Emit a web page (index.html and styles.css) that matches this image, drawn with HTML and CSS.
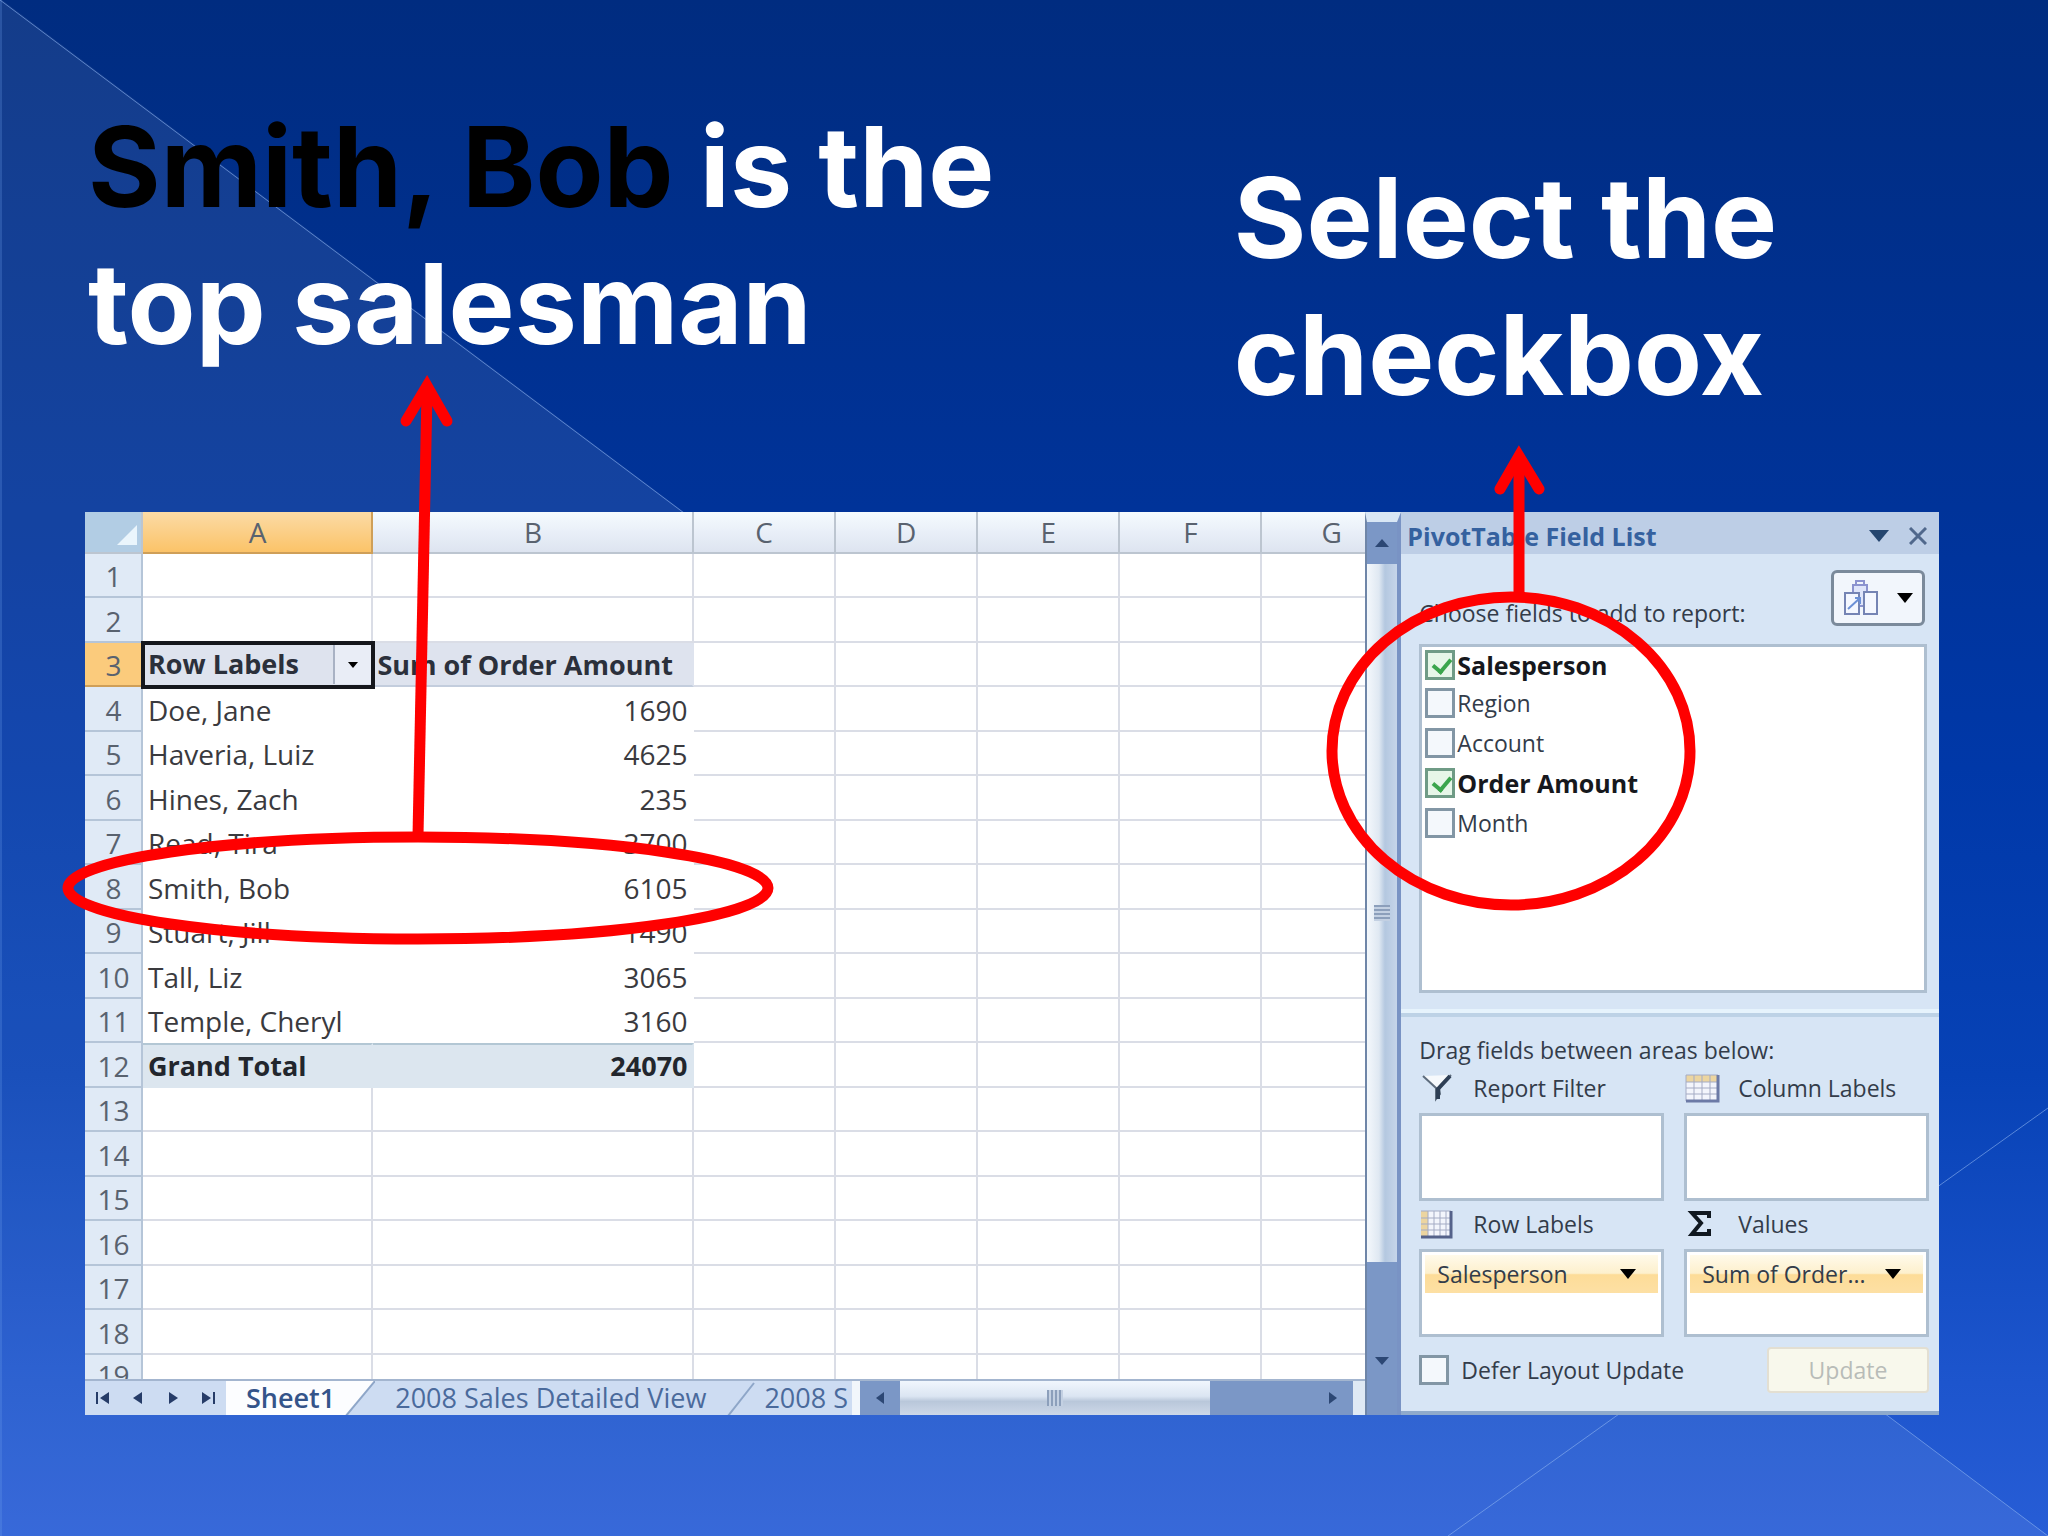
FILE: index.html
```
<!DOCTYPE html>
<html lang="en">
<head>
  <meta charset="UTF-8" />
  <meta name="viewport" content="width=device-width, initial-scale=1" />
  <title>PivotTable: top salesman</title>
  <link rel="stylesheet" href="styles.css">
</head>
<body>
  <main class="slide">
    <svg class="backdrop" viewBox="0 0 2048 1536" preserveAspectRatio="none" aria-hidden="true">
      <path class="wedge" d="M2 0L2048 1536H2z" />
      <path class="ray" d="M0 0L2048 1536M1448 1536L2048 1108M1 0V1536" />
    </svg>

    <header class="callouts">
      <h1><span class="name">Smith, Bob</span> is the<br>top salesman</h1>
      <h2>Select the<br>checkbox</h2>
    </header>

    <section class="workbook">
      <div class="sheet">
        <table class="cells">
          <colgroup>
            <col class="col-num"><col class="col-a"><col class="col-b">
            <col class="col-n"><col class="col-n"><col class="col-n"><col class="col-n"><col>
          </colgroup>
          <thead>
            <tr>
              <th class="corner"><svg viewBox="0 0 24 24" width="24" height="24"><path d="M22 2V22H2z" fill="#eaf5fc" /></svg></th>
              <th class="active">A</th><th>B</th><th>C</th><th>D</th><th>E</th><th>F</th><th class="last">G</th>
            </tr>
          </thead>
          <tbody>
            <tr><th>1</th><td></td><td></td><td></td><td></td><td></td><td></td><td></td></tr>
            <tr><th>2</th><td></td><td></td><td></td><td></td><td></td><td></td><td></td></tr>
            <tr class="pivot-head">
              <th class="active">3</th>
              <td class="selected"><div class="filter-cell">Row Labels<button type="button" aria-label="Filter row labels"><svg viewBox="0 0 12 8" width="12" height="8"><path d="M1 1H11L6 7z" /></svg></button></div></td>
              <td>Sum of Order Amount</td><td></td><td></td><td></td><td></td><td></td>
            </tr>
            <tr class="pivot"><th>4</th><td>Doe, Jane</td><td>1690</td><td></td><td></td><td></td><td></td><td></td></tr>
            <tr class="pivot"><th>5</th><td>Haveria, Luiz</td><td>4625</td><td></td><td></td><td></td><td></td><td></td></tr>
            <tr class="pivot"><th>6</th><td>Hines, Zach</td><td>235</td><td></td><td></td><td></td><td></td><td></td></tr>
            <tr class="pivot"><th>7</th><td>Read, Tira</td><td>3700</td><td></td><td></td><td></td><td></td><td></td></tr>
            <tr class="pivot"><th>8</th><td>Smith, Bob</td><td>6105</td><td></td><td></td><td></td><td></td><td></td></tr>
            <tr class="pivot"><th>9</th><td>Stuart, Jill</td><td>1490</td><td></td><td></td><td></td><td></td><td></td></tr>
            <tr class="pivot"><th>10</th><td>Tall, Liz</td><td>3065</td><td></td><td></td><td></td><td></td><td></td></tr>
            <tr class="pivot"><th>11</th><td>Temple, Cheryl</td><td>3160</td><td></td><td></td><td></td><td></td><td></td></tr>
            <tr class="pivot total"><th>12</th><td>Grand Total</td><td>24070</td><td></td><td></td><td></td><td></td><td></td></tr>
            <tr><th>13</th><td></td><td></td><td></td><td></td><td></td><td></td><td></td></tr>
            <tr><th>14</th><td></td><td></td><td></td><td></td><td></td><td></td><td></td></tr>
            <tr><th>15</th><td></td><td></td><td></td><td></td><td></td><td></td><td></td></tr>
            <tr><th>16</th><td></td><td></td><td></td><td></td><td></td><td></td><td></td></tr>
            <tr><th>17</th><td></td><td></td><td></td><td></td><td></td><td></td><td></td></tr>
            <tr><th>18</th><td></td><td></td><td></td><td></td><td></td><td></td><td></td></tr>
            <tr class="cut"><th><div>19</div></th><td></td><td></td><td></td><td></td><td></td><td></td><td></td></tr>
          </tbody>
        </table>

        <div class="tabbar">
          <div class="tab-nav">
            <button type="button" aria-label="First sheet"><svg viewBox="0 0 16 16" width="16" height="16"><path d="M1 2H3V14H1zM14 2V14L5 8z" /></svg></button>
            <button type="button" aria-label="Previous sheet"><svg viewBox="0 0 16 16" width="16" height="16"><path d="M12 2V14L3 8z" /></svg></button>
            <button type="button" aria-label="Next sheet"><svg viewBox="0 0 16 16" width="16" height="16"><path d="M4 2V14L13 8z" /></svg></button>
            <button type="button" aria-label="Last sheet"><svg viewBox="0 0 16 16" width="16" height="16"><path d="M2 2V14L11 8zM13 2H15V14H13z" /></svg></button>
          </div>
          <button type="button" class="tab current">Sheet1</button>
          <svg class="slant" viewBox="0 0 30 36" width="30" height="36"><path d="M0 0H30L0 36z" fill="#fcfdff" /><path d="M30 0L0 36" stroke="#8ea6c8" stroke-width="2" /></svg>
          <button type="button" class="tab">2008 Sales Detailed View</button>
          <svg class="slant" viewBox="0 0 30 36" width="30" height="36"><path d="M28 2L2 35" stroke="#8ea6c8" stroke-width="2" /></svg>
          <button type="button" class="tab next">2008 S</button>
          <div class="hscroll">
            <span class="arrow"><svg viewBox="0 0 16 16" width="16" height="16"><path d="M12 2V14L4 8z" /></svg></span>
            <span class="thumb"><i class="grip"></i></span>
            <span class="arrow end"><svg viewBox="0 0 16 16" width="16" height="16"><path d="M4 2V14L12 8z" /></svg></span>
          </div>
        </div>
      </div>

      <div class="vscroll">
        <span class="arrow"><svg viewBox="0 0 16 16" width="16" height="16"><path d="M1 12H15L8 4z" /></svg></span>
        <span class="thumb"><i class="grip"></i></span>
        <span class="arrow end"><svg viewBox="0 0 16 16" width="16" height="16"><path d="M1 4H15L8 12z" /></svg></span>
      </div>

      <aside class="pane">
        <div class="pane-title">
          <strong>PivotTable Field List</strong>
          <button type="button" aria-label="Pane options"><svg viewBox="0 0 20 12" width="20" height="12"><path d="M0 0H20L10 12z" fill="#25466f" /></svg></button>
          <button type="button" aria-label="Close"><svg viewBox="0 0 18 18" width="18" height="18"><path d="M1 1L17 17M17 1L1 17" stroke="#50688c" stroke-width="3" /></svg></button>
        </div>

        <div class="choose">
          <span>Choose fields to add to report:</span>
          <button type="button" class="layout-btn" aria-label="Field list layout">
            <svg viewBox="0 0 36 40" width="36" height="40">
              <path d="M10 7H24V28H10z" fill="#dfe5fa" stroke="#8c93cf" stroke-width="2" />
              <path d="M13 7V3H21V7" fill="none" stroke="#8c93cf" stroke-width="2" />
              <path d="M2 15H16V36H2zM21 14H34V36H21z" fill="#f4f7ff" stroke="#7584b4" stroke-width="2" />
              <path d="M5 31L17 20M12 20H17V26" fill="none" stroke="#6c90d6" stroke-width="2" />
            </svg>
            <svg viewBox="0 0 16 10" width="16" height="10"><path d="M0 0H16L8 10z" /></svg>
          </button>
        </div>

        <div class="fields">
          <label class="on"><input type="checkbox" checked>Salesperson</label>
          <label><input type="checkbox">Region</label>
          <label><input type="checkbox">Account</label>
          <label class="on"><input type="checkbox" checked>Order Amount</label>
          <label><input type="checkbox">Month</label>
        </div>

        <div class="areas">
          <p>Drag fields between areas below:</p>
          <div class="area-grid">
            <div class="area">
              <div class="area-name">
                <svg viewBox="0 0 36 32" width="36" height="32"><path d="M4 4L17 16V27L21 22L20 16L32 3" fill="#f6f9fc" stroke="#5d6c7d" stroke-width="2" /><path d="M31 4L19 17V27" fill="none" stroke="#2e3f55" stroke-width="4" /></svg>
                Report Filter
              </div>
              <div class="drop"></div>
            </div>
            <div class="area">
              <div class="area-name">
                <svg viewBox="0 0 36 32" width="36" height="32"><path d="M2 3H34V29H2z" fill="#f3f5fc" /><path d="M2 3H34V10H2z" fill="#ecd5a0" /><path d="M2 3V29M10 3V29M18 3V29M26 3V29M2 10H34M2 16H34M2 22H34M2 3H34" stroke="#a4abc4" stroke-width="1" /><path d="M2 29H34V3" fill="none" stroke="#6c7aa6" stroke-width="3" /></svg>
                Column Labels
              </div>
              <div class="drop"></div>
            </div>
            <div class="area">
              <div class="area-name">
                <svg viewBox="0 0 36 32" width="36" height="32"><path d="M2 3H32V29H2z" fill="#f3f5fc" /><path d="M2 3H9V29H2z" fill="#ecd5a0" /><path d="M9 3V29M15 3V29M21 3V29M27 3V29M2 10H32M2 16H32M2 22H32M2 3H32" stroke="#a4abc4" stroke-width="1" /><path d="M2 29H32V3" fill="none" stroke="#55628a" stroke-width="3" /></svg>
                Row Labels
              </div>
              <div class="drop">
                <button type="button" class="chip"><span>Salesperson</span><svg viewBox="0 0 16 10" width="16" height="10"><path d="M0 0H16L8 10z" /></svg></button>
              </div>
            </div>
            <div class="area">
              <div class="area-name">
                <svg viewBox="0 0 36 32" width="36" height="32"><path d="M25 10V5H8L17 15L8 26H25V21" fill="none" stroke="#101820" stroke-width="4" /></svg>
                Values
              </div>
              <div class="drop">
                <button type="button" class="chip"><span>Sum of Order...</span><svg viewBox="0 0 16 10" width="16" height="10"><path d="M0 0H16L8 10z" /></svg></button>
              </div>
            </div>
          </div>
          <div class="defer">
            <label><input type="checkbox">Defer Layout Update</label>
            <button type="button" disabled>Update</button>
          </div>
        </div>
      </aside>
    </section>

    <svg class="marks" viewBox="0 0 2048 1536" preserveAspectRatio="none" aria-hidden="true">
      <ellipse cx="418" cy="888" rx="350" ry="51" />
      <path d="M418 836L427 392" />
      <path class="head" d="M406 421L427 386L447 421" />
      <ellipse cx="1511" cy="751" rx="179" ry="154" />
      <path d="M1519 597V460" />
      <path class="head" d="M1500 489L1519 456L1539 489" />
    </svg>
  </main>
</body>
</html>
```
FILE: styles.css
```
* {
  box-sizing: border-box;
}

body {
  margin: 0;
  font-family: "Open Sans", "Noto Sans", sans-serif;
  font-size: 23px;
  color: #333c4a;
}

button {
  font: inherit;
  color: inherit;
  background: none;
  border: none;
  padding: 0;
}

svg {
  flex: none;
}

.slide {
  position: relative;
  min-height: 100vh;
  padding-bottom: 120px;
  overflow: hidden;
  background: linear-gradient(#002c80 0%, #003399 33%, #0038a8 50%, #0742b6 70%, #1d55cd 90%, #275dd6 100%);
}

.backdrop,
.marks {
  position: absolute;
  inset: 0;
  width: 100%;
  height: 100%;
  pointer-events: none;
}
.wedge {
  fill: #fff;
  fill-opacity: 0.08;
}
.ray {
  fill: none;
  stroke: #8db4f0;
  stroke-opacity: 0.6;
  stroke-width: 1;
}

/* headings */
.callouts {
  position: relative;
  display: grid;
  grid-template-columns: 1144fr 813fr;
  min-height: 512px;
  padding: 98px 0 0 88px;
  color: #fff;
  font-family: Inter, "Open Sans", sans-serif;
}
.callouts h1,
.callouts h2 {
  margin: 0;
  font-size: 111px;
  line-height: 137px;
  font-weight: 700;
}
.callouts h2 {
  margin-top: 51px;
}
.name {
  color: #000;
}

/* workbook window */
.workbook {
  position: relative;
  display: grid;
  grid-template-columns: minmax(0, 1fr) 36px 29%;
  margin: 0 109px 0 85px;
  background: #fff;
}

.cells {
  width: 100%;
  table-layout: fixed;
  border-spacing: 0;
  font-size: 28px;
  line-height: 40px;
}
.col-num {
  width: 58px;
}
.col-a {
  width: 18%;
}
.col-b {
  width: 25%;
}
.col-n {
  width: 11.1%;
}
.cells th,
.cells td {
  padding: 2px 4px 0 5px;
  border-right: 2px solid #dadde6;
  border-bottom: 2px solid #dadde6;
  white-space: nowrap;
}
.cells tr > :last-child {
  border-right: none;
}
.cells th {
  font-weight: 400;
  color: #59626f;
  text-align: center;
}
.cells thead th {
  height: 42px;
  padding-top: 0;
  background: linear-gradient(#f5fbfe 0%, #e9eff8 50%, #dde4f0 100%);
  border-color: #bcc5d0;
}
.cells thead .corner {
  padding: 6px 2px 0 0;
  text-align: right;
  line-height: 0;
  background: #b2cde4;
}
.cells thead .active {
  background: linear-gradient(#fbdba6, #fbc368);
  border-color: #cf9f58;
}
.cells thead .last {
  padding-left: 40px;
}
.cells tbody tr {
  height: 45px;
}
.cells tbody tr:nth-child(odd) {
  height: 44px;
}
.cells tbody th {
  background: #e0eaf6;
  border-color: #b5c5d8;
}
.cells tbody th.active {
  background: #fbcb7c;
  border-color: #cf9f58;
}

.cells td {
  color: #3a3a3e;
}
.cells .pivot td:nth-child(2),
.cells .pivot td:nth-child(3) {
  border-color: #fff;
}
.cells .pivot td:nth-child(3) {
  text-align: right;
}
.cells .pivot-head td:nth-child(2),
.cells .pivot-head td:nth-child(3) {
  background: #dee3ee;
  border-color: #dee3ee;
  border-bottom-color: #c3cddd;
  color: #2b303b;
  font-size: 27px;
  font-weight: 700;
}
.cells .pivot-head td:nth-child(3) {
  padding-left: 4px;
}
.cells .pivot-head .selected {
  padding: 0 0 0 5px;
  outline: 4px solid #15171c;
  outline-offset: -2px;
}
.filter-cell {
  display: flex;
  justify-content: space-between;
}
.filter-cell button {
  width: 38px;
  border-left: 2px solid #a9b2c4;
  background: #e9edf6;
  line-height: 0;
}
.cells .total td:nth-child(2),
.cells .total td:nth-child(3) {
  padding-top: 0;
  background: #dce6ef;
  border-color: #dce6ef;
  border-top: 2px solid #b3c7d4;
  color: #22262d;
  font-size: 27px;
  font-weight: 700;
}
.cells tbody .cut:last-child {
  height: 24px;
}
.cells .cut th,
.cells .cut td {
  padding-top: 0;
  border-bottom: none;
}
.cut div {
  height: 24px;
  overflow: hidden;
}

/* sheet tabs */
.tabbar {
  display: flex;
  height: 36px;
  background: #cddcf2;
  border-top: 2px solid #a3b5cf;
  overflow: hidden;
}
.tab-nav {
  display: flex;
  align-items: center;
  justify-content: space-around;
  width: 141px;
  fill: #263c68;
}
.tab-nav button {
  line-height: 0;
}
.tab {
  padding: 0 20px;
  font-size: 27px;
  line-height: 34px;
  color: #4a6a9c;
  white-space: nowrap;
}
.tab.current {
  padding-right: 10px;
  background: #fcfdff;
  color: #34548a;
  font-weight: 600;
}
.tab.next {
  padding: 0 4px 0 8px;
}

/* scrollbars */
.hscroll,
.vscroll {
  display: flex;
  background: #7b97c6;
  fill: #2c4774;
}
.hscroll {
  flex: 1;
  border-left: 8px solid #f1f6fb;
  border-right: 12px solid #dfe9f4;
}
.vscroll {
  flex-direction: column;
  border-top: 10px solid #d9e7f5;
  border-left: 2px solid #6f86a8;
  border-right: 4px solid #7993c4;
}
.arrow {
  flex: none;
  display: flex;
  align-items: center;
  justify-content: center;
  width: 40px;
}
.vscroll .arrow {
  width: auto;
  height: 42px;
}
.thumb {
  flex: 1;
  display: flex;
  align-items: center;
  justify-content: center;
}
.hscroll .thumb {
  background: linear-gradient(#f0f6fd, #dbe5f2 45%, #b9c7da 60%, #cdd8e8);
}
.hscroll .end {
  width: 143px;
  justify-content: flex-end;
  padding-right: 12px;
}
.vscroll .thumb {
  background: linear-gradient(90deg, #f4f8fc, #dfe8f2 40%, #b4c8e0 60%, #c6d5ea);
}
.vscroll .end {
  height: 153px;
  align-items: flex-end;
  padding-bottom: 46px;
}
.grip {
  width: 16px;
  height: 16px;
  background: repeating-linear-gradient(90deg, #8c9fbb 0 2px, #c3d0e2 2px 4px);
}
.vscroll .grip {
  background: repeating-linear-gradient(#8c9fbb 0 2px, #c3d0e2 2px 4px);
}

/* field list pane */
.pane {
  display: flex;
  flex-direction: column;
  background: #d7e5f5;
  border-bottom: 4px solid #8faacb;
}
.pane-title {
  display: flex;
  align-items: center;
  gap: 20px;
  height: 42px;
  padding: 6px 12px 0 6px;
  background: #bdcee6;
  color: #35619f;
}
.pane-title strong {
  flex: 1;
  font-size: 25px;
}
.pane-title button {
  line-height: 0;
}
.choose {
  display: flex;
  align-items: flex-end;
  justify-content: space-between;
  padding: 16px 14px 18px 18px;
}
.choose span {
  line-height: 26px;
}
.layout-btn {
  display: flex;
  align-items: center;
  justify-content: space-around;
  width: 94px;
  height: 56px;
  border: 3px solid #7b8a9b;
  border-radius: 6px;
  background: #f2f6fc;
}
.fields {
  display: flex;
  flex-direction: column;
  height: 349px;
  margin: 0 12px 20px 18px;
  padding: 0 3px;
  border: 3px solid #aebfd0;
  background: #fff;
}
.fields label {
  display: flex;
  align-items: center;
  gap: 2px;
  height: 40px;
  line-height: 30px;
}
.fields label:first-child {
  height: 36px;
}
.fields .on {
  font-size: 25px;
  font-weight: 700;
  color: #16181d;
}
input[type="checkbox"] {
  appearance: none;
  width: 30px;
  height: 30px;
  margin: 0;
  border: 3px solid #8296a5;
  background: #f4f8fc;
}
input[type="checkbox"]:checked {
  border-color: #6f9b86;
  background: #e6f6e8;
}
input[type="checkbox"]:checked::before {
  content: "";
  display: block;
  width: 8px;
  height: 14px;
  margin: 2px 0 0 8px;
  border: solid #3aa54c;
  border-width: 0 4px 4px 0;
  transform: rotate(40deg);
}

.areas {
  flex: 1;
  padding: 16px 10px 0 18px;
  border-top: 4px solid #bdd2e6;
  box-shadow: 0 -4px 0 #e6f3fc;
}
.areas p {
  margin: 0;
  line-height: 34px;
}
.area-grid {
  display: grid;
  grid-template-columns: 1fr 1fr;
  gap: 2px 20px;
}
.area-name {
  display: flex;
  align-items: center;
  gap: 18px;
  height: 46px;
  padding-bottom: 4px;
}
.drop {
  height: 88px;
  padding: 3px;
  border: 3px solid #aebfd0;
  background: #fff;
}
.chip {
  display: flex;
  align-items: center;
  justify-content: space-between;
  width: 100%;
  height: 38px;
  padding: 0 22px 0 12px;
  background: linear-gradient(#fffaea 0%, #fdf0cd 48%, #fddc98 52%, #fde0a4 100%);
}
.defer {
  display: flex;
  align-items: center;
  justify-content: space-between;
  padding-top: 10px;
}
.defer label {
  display: flex;
  align-items: center;
  gap: 12px;
}
.defer button {
  width: 162px;
  height: 46px;
  border: 2px solid #e3dfd2;
  border-radius: 4px;
  background: #f8f8ec;
  color: #b8bcb8;
}

/* red annotations */
.marks {
  fill: none;
  stroke: #f00;
  stroke-width: 11;
}
.head {
  stroke-linecap: round;
  stroke-miterlimit: 10;
}
```
